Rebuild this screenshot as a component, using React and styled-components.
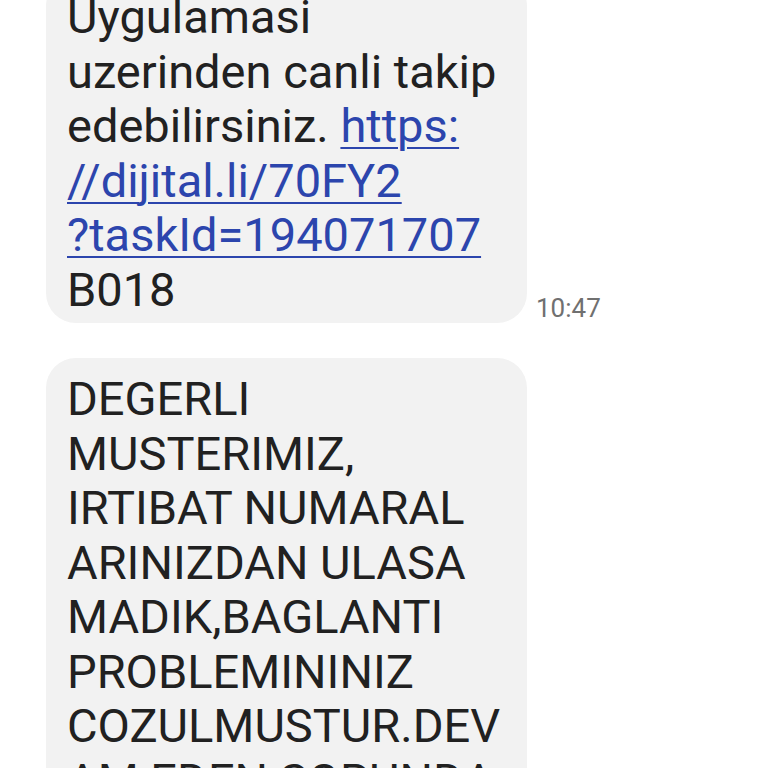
import React from 'react'
import styled, { createGlobalStyle } from 'styled-components'

const GlobalStyle = createGlobalStyle`
    html, body {
        margin: 0;
        padding: 0;
        background: #ffffff;
    }
    body {
        font-family: Roboto, "Noto Sans", "Liberation Sans", sans-serif;
        -webkit-font-smoothing: antialiased;
    }
`;

const Screen = styled.div`
    width: 768px;
    height: 768px;
    overflow: hidden;
    background: #ffffff;
`;

// the conversation is scrolled, so the first bubble starts above the fold
const Thread = styled.div`
    display: flex;
    flex-direction: column;
    gap: 35px;
    margin-top: -24px;
    padding-left: 46px;
`;

const MessageRow = styled.div`
    display: flex;
    align-items: flex-end;
    gap: 9px;
`;

const Bubble = styled.div`
    width: 481px;
    box-sizing: border-box;
    padding: 14px 16px 6px 21px;
    background: #f2f2f2;
    border-radius: 30px;
    color: #212121;
    font-size: 47px;
    line-height: 54.5px;
    white-space: nowrap;
`;

const Link = styled.a`
    color: #2c45ad;
    text-decoration: underline;
    text-decoration-thickness: 2px;
    text-underline-offset: 5px;
`;

const Time = styled.span`
    font-size: 26px;
    line-height: 26px;
    color: #707070;
    margin-bottom: 2px;
`;

const lines = [
    'DEGERLI',
    'MUSTERIMIZ,',
    'IRTIBAT NUMARAL',
    'ARINIZDAN ULASA',
    'MADIK,BAGLANTI',
    'PROBLEMININIZ',
    'COZULMUSTUR.DEV',
    'AM EDEN SORUNDA',
]

function App() {
    return (
        <Screen>
            <GlobalStyle />
            <Thread>
                <MessageRow>
                    <Bubble>
                        Uygulamasi<br />
                        uzerinden canli takip<br />
                        edebilirsiniz. <Link href="#">https:<br />//dijital.li/70FY2<br />?taskId=194071707</Link><br />
                        B018
                    </Bubble>
                    <Time>10:47</Time>
                </MessageRow>
                <MessageRow>
                    <Bubble>
                        {lines.map((line, i) => (
                            <React.Fragment key={i}>
                                {line}
                                {i < lines.length - 1 && <br />}
                            </React.Fragment>
                        ))}
                    </Bubble>
                </MessageRow>
            </Thread>
        </Screen>
    )
}

export default App
